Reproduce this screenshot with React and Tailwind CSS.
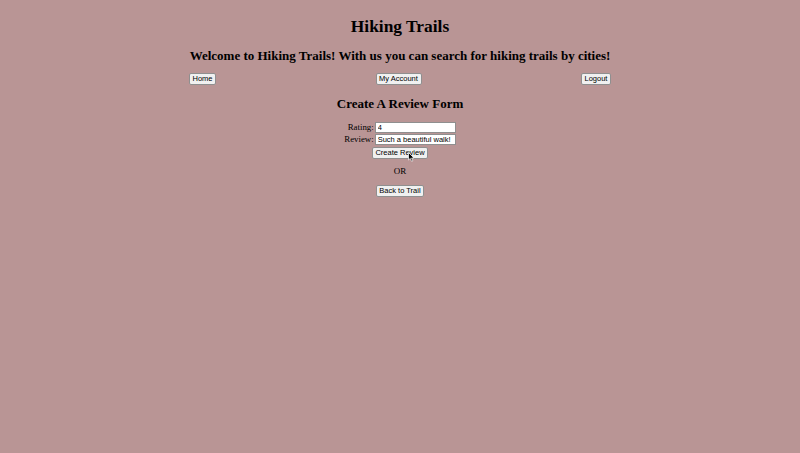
const btn =
  'h-[12px] px-0 whitespace-nowrap bg-[#f0f0f0] border border-[#8f8f8f] rounded-[2px] text-[7.5px] leading-none text-black font-["Liberation_Sans",Arial,sans-serif]';

const field =
  "w-[81px] h-[11px] bg-white border border-[#8f8f8f] px-[2px] text-[7.5px] leading-none text-black font-['Liberation_Sans',Arial,sans-serif] outline-none";

const App = () => {
  return (
    <div className="min-h-[453px] w-full bg-[#b99595] text-black font-['Liberation_Serif',serif] flex flex-col items-center">
      <h1 className="mt-[16px] text-[17.4px] leading-[20px] font-bold">Hiking Trails</h1>
      <h2 className="mt-[12px] text-[13px] leading-[16px] font-bold">
        Welcome to Hiking Trails! With us you can search for hiking trails by cities!
      </h2>

      <div className="mt-[9px] w-[422px] flex justify-between items-center">
        <button className={`${btn} w-[27px]`}>Home</button>
        <button className={`${btn} w-[46px]`}>My Account</button>
        <button className={`${btn} w-[30px]`}>Logout</button>
      </div>

      <h2 className="mt-[11px] text-[13px] leading-[16px] font-bold">Create A Review Form</h2>

      <div className="relative mt-[10px] flex flex-col items-center">
        <div className="grid grid-cols-[auto_auto] gap-y-[1px] items-center text-[8.8px] leading-[11px]">
          <label className="text-right pr-[1px]">Rating:</label>
          <input readOnly value="4" className={field} />
          <label className="text-right pr-[1px]">Review:</label>
          <input readOnly value="Such a beautiful walk!" className={field} />
        </div>
        <button className={`${btn} w-[56px] mt-[2px]`}>Create Review</button>
        <svg
          className="absolute left-[64px] top-[30px]"
          width="7"
          height="10"
          viewBox="0 0 7 10"
        >
          <path d="M0.5 0.5 L0.5 8 L2.3 6.4 L3.6 9.3 L4.8 8.8 L3.6 6 L6 6 Z" fill="#000" stroke="#fff" strokeWidth="0.7" />
        </svg>
      </div>

      <p className="mt-[7px] text-[9px] leading-[10px]">OR</p>

      <button className={`${btn} w-[48px] mt-[9px]`}>Back to Trail</button>
    </div>
  );
};

export default App;
